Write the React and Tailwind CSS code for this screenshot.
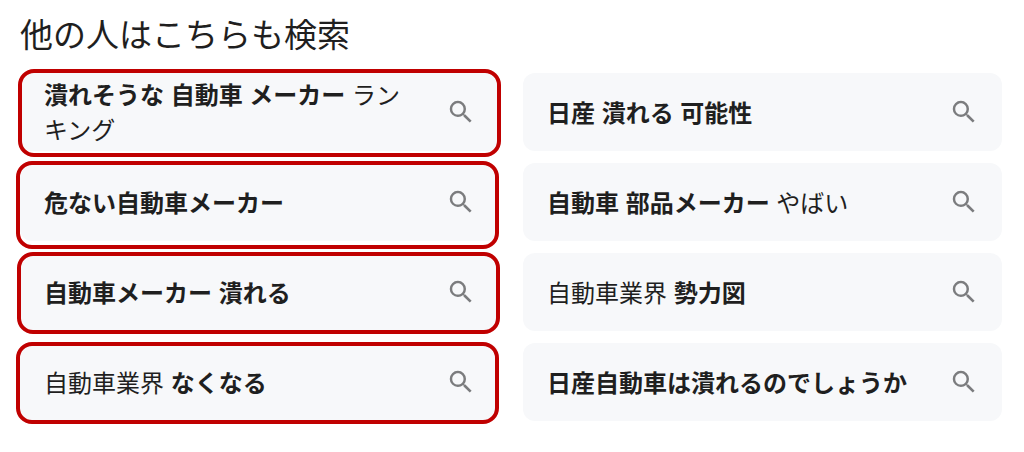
const items = [
  { parts: [['潰れそうな 自動車 メーカー', true], [' ランキング', false]], ring: '-top-1 -bottom-1.5 -left-0.5 -right-0.5' },
  { parts: [['日産 潰れる 可能性', true]] },
  { parts: [['危ない自動車メーカー', true]], ring: '-top-0.5 -bottom-2 -left-1 right-0' },
  { parts: [['自動車 部品メーカー', true], [' やばい', false]] },
  { parts: [['自動車メーカー 潰れる', true]], ring: '-top-px -bottom-[3px] -left-[3px] -right-px' },
  { parts: [['自動車業界 ', false], ['勢力図', true]] },
  { parts: [['自動車業界 ', false], ['なくなる', true]], ring: '-top-px -bottom-[3px] -left-1 right-0' },
  { parts: [['日産自動車は潰れるのでしょうか', true]] },
];

function SearchIcon() {
  return (
    <svg viewBox="0 0 24 24" className="size-[30px] shrink-0 fill-[#7b7c7e]" aria-hidden="true">
      <path d="M15.5 14h-.79l-.28-.27A6.47 6.47 0 0 0 16 9.5 6.5 6.5 0 1 0 9.5 16c1.61 0 3.09-.59 4.23-1.57l.27.28v.79l5 4.99L20.49 19l-4.99-5zm-6 0C7.01 14 5 11.99 5 9.5S7.01 5 9.5 5 14 7.01 14 9.5 11.99 14 9.5 14z" />
    </svg>
  );
}

export default function App() {
  return (
    <main className="bg-white pt-3 pr-[22px] pb-7 pl-5 font-['Liberation_Sans','Noto_Sans_CJK_JP',sans-serif] text-[#1f1f1f]">
      <h1 className="mb-[13px] text-[33px] leading-12">他の人はこちらも検索</h1>
      <ul className="grid grid-cols-2 gap-x-6 gap-y-3">
        {items.map(({ parts, ring }, i) => (
          <li key={i}>
            <a href="#" className="relative flex min-h-[78px] items-center justify-between rounded-xl bg-[#f7f8fa] pr-[23px] pl-6">
              <span className="max-w-[370px] pt-0.5 text-2xl leading-[35px]">
                {parts.map(([text, bold], j) => (
                  <span key={j} className={bold ? 'font-bold' : ''}>{text}</span>
                ))}
              </span>
              <SearchIcon />
              {ring && <span className={'absolute rounded-2xl border-4 border-[#c00000] ' + ring} />}
            </a>
          </li>
        ))}
      </ul>
    </main>
  );
}
